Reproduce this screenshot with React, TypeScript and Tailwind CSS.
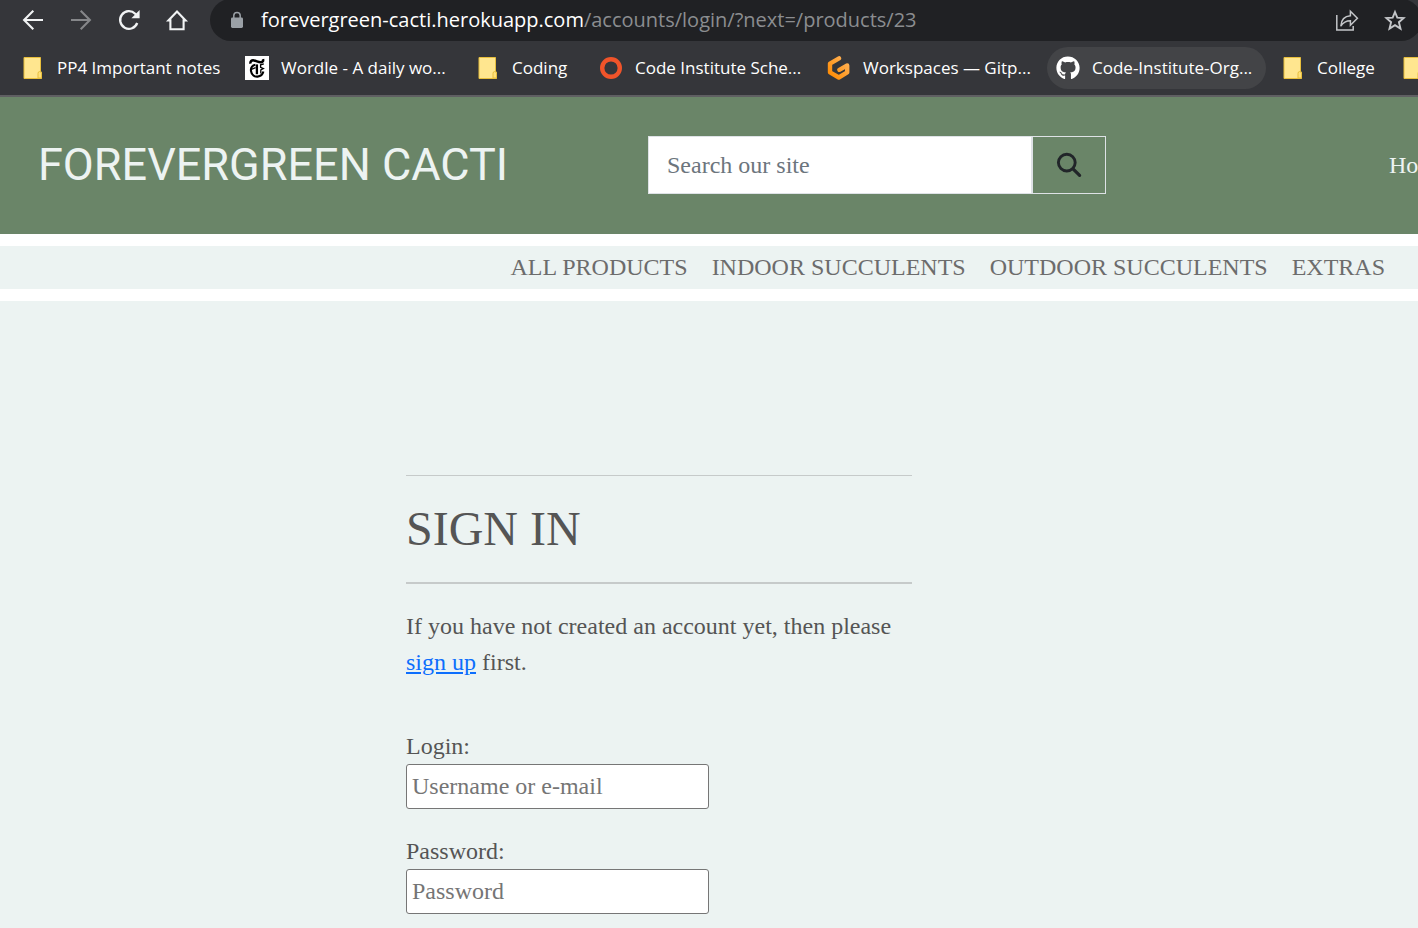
import React from 'react';
import { FaGithub } from 'react-icons/fa';

const chromeText = "font-['Open_Sans','Noto_Sans',sans-serif]";

function FolderIcon() {
  return (
    <svg width="22" height="24" viewBox="0 0 22 24" className="shrink-0" aria-hidden="true">
      <path d="M1 1.5H17.5V15.5L18.5 16V22.5H1Z" fill="#ffe68f" stroke="#e8bf3c" strokeWidth="1" />
      <path d="M15 22V17.5Q15 15.5 16.7 15.5Q18.5 15.5 18.5 17.5V22Z" fill="#ffe07a" stroke="#e8bf3c" strokeWidth="1" />
    </svg>
  );
}

function TimesIcon() {
  return (
    <svg width="24" height="24" viewBox="0 0 24 24" className="shrink-0" aria-hidden="true">
      <rect width="24" height="24" fill="#fff" />
      <g fill="none" stroke="#000">
        <path d="M5.6 7.6C5 5.2 6.6 4 9 4.4C11.6 4.9 13.6 6.4 16 6.2C17.8 6 18.5 4.8 18 3.2" strokeWidth="2.5" />
        <path d="M10.4 8.8C7.2 9.6 5.6 12 6 15C6.6 19 9.6 20.8 12.6 20.6C15.4 20.4 17.6 18.8 18.4 15.6" strokeWidth="2.1" />
        <path d="M11.9 8.4V18.2" strokeWidth="2.3" />
        <path d="M6.4 13.4L10.6 11.6" strokeWidth="1.3" />
        <path d="M18.8 7.8L15.6 8.8V11.4L18.4 12.6L15.8 14V17.6" strokeWidth="1.3" />
      </g>
    </svg>
  );
}

function RingIcon() {
  return (
    <svg width="24" height="24" viewBox="0 0 24 24" className="shrink-0" aria-hidden="true">
      <circle cx="12" cy="12" r="8.8" fill="none" stroke="#f0542a" strokeWidth="4.4" />
    </svg>
  );
}

function GitpodIcon() {
  return (
    <svg width="24" height="24" viewBox="0 0 24 24" className="shrink-0" aria-hidden="true">
      <defs>
        <linearGradient id="gitpod" x1="1" y1="0" x2="0" y2="1">
          <stop offset="0" stopColor="#ffb45b" />
          <stop offset="1" stopColor="#ff8a00" />
        </linearGradient>
      </defs>
      <path d="M12 2.4L3 7.6V16.4L11.8 21.5L20.2 16.4V9.4L12.4 13.8" fill="none" stroke="url(#gitpod)" strokeWidth="4.4" strokeLinecap="round" strokeLinejoin="round" />
    </svg>
  );
}

function BackIcon() {
  return (
    <svg width="24" height="24" viewBox="0 0 24 24" fill="none" stroke="currentColor" strokeWidth="2.1" aria-hidden="true">
      <path d="M22 12H3.5M12.3 2.8L3.1 12L12.3 21.2" />
    </svg>
  );
}

function ForwardIcon() {
  return (
    <svg width="24" height="24" viewBox="0 0 24 24" fill="none" stroke="currentColor" strokeWidth="2.1" aria-hidden="true">
      <path d="M2 12H20.5M11.7 2.8L20.9 12L11.7 21.2" />
    </svg>
  );
}

function ReloadIcon() {
  return (
    <svg width="24" height="24" viewBox="0 0 24 24" fill="none" aria-hidden="true">
      <path d="M20.2 15A8.8 8.8 0 1 1 18.2 5.8L19.6 7.2" stroke="currentColor" strokeWidth="2.3" />
      <path d="M22.6 2V10.2H14.4Z" fill="currentColor" />
    </svg>
  );
}

function HomeIcon() {
  return (
    <svg width="24" height="24" viewBox="0 0 24 24" fill="none" stroke="currentColor" strokeWidth="2.1" aria-hidden="true">
      <path d="M3.4 12.4H5.4V21.2H18.6V12.4H20.6L12 3.4Z" />
    </svg>
  );
}

function LockIcon() {
  return (
    <svg width="14" height="18" viewBox="0 0 14 18" className="shrink-0" aria-hidden="true">
      <rect x="1" y="6.5" width="12" height="10.5" rx="1.4" fill="#9aa0a6" />
      <path d="M3.8 7V4.6A3.2 3.2 0 0 1 10.2 4.6V7" fill="none" stroke="#9aa0a6" strokeWidth="1.5" />
    </svg>
  );
}

function ShareIcon() {
  return (
    <svg width="24" height="24" viewBox="0 0 24 24" fill="none" stroke="currentColor" strokeWidth="1.5" aria-hidden="true">
      <path d="M1.8 7V22H18.2V18" />
      <path d="M5.8 18.2C6.2 12 9.5 8.1 15.4 7.8V3.2L22.4 10.2L15.4 17.2V12.8C11.2 12.8 8.2 14.4 5.8 18.2Z" />
    </svg>
  );
}

function StarIcon() {
  return (
    <svg width="24" height="24" viewBox="0 0 24 24" fill="none" stroke="currentColor" strokeWidth="1.9" aria-hidden="true">
      <path d="M12 4L14.3 9.6L20.6 10.1L15.9 14.2L17.5 20.6L12 17.2L6.5 20.6L8.1 14.2L3.4 10.1L9.7 9.6Z" />
    </svg>
  );
}

function SearchIcon() {
  return (
    <svg width="26" height="26" viewBox="0 0 26 26" fill="none" stroke="#212529" aria-hidden="true">
      <circle cx="10.8" cy="10.6" r="8.4" strokeWidth="2.9" />
      <path d="M17 16.8L23.6 23.4" strokeWidth="3.2" strokeLinecap="round" />
    </svg>
  );
}

function Bookmark({ icon, label, className = '' }: { icon: React.ReactNode; label: string; className?: string }) {
  return (
    <a href="#" className={`flex h-[42px] shrink-0 items-center gap-3 whitespace-nowrap rounded-full ${className}`}>
      {icon}
      {label && <span>{label}</span>}
    </a>
  );
}

function BrowserBar() {
  return (
    <div className={`${chromeText} overflow-hidden border-b-2 border-[#5f5f62] bg-[#35363a] text-white`}>
      <div className="flex h-10 items-center">
        <div className="flex w-[210px] shrink-0 gap-6 pl-[21px] text-[#f1f3f4]">
          <button type="button" aria-label="Back"><BackIcon /></button>
          <button type="button" aria-label="Forward" className="text-[#86878a]"><ForwardIcon /></button>
          <button type="button" aria-label="Reload"><ReloadIcon /></button>
          <button type="button" aria-label="Home"><HomeIcon /></button>
        </div>
        <div className="-mr-1 flex h-[42px] grow items-center rounded-full bg-[#202124] pr-[15px] pl-5">
          <LockIcon />
          <p className="grow pl-[17px] text-[20px] leading-6 whitespace-nowrap text-[#8b8d90]">
            <span className="text-white">forevergreen-cacti.herokuapp.com</span>/accounts/login/?next=/products/23
          </p>
          <div className="flex gap-6 text-[#c4c6c9]">
            <button type="button" aria-label="Share"><ShareIcon /></button>
            <button type="button" aria-label="Bookmark this page"><StarIcon /></button>
          </div>
        </div>
      </div>
      <nav aria-label="Bookmarks" className="flex h-[55px] items-center pt-px pl-[23px] text-[17px] leading-6">
        <Bookmark icon={<FolderIcon />} label="PP4 Important notes" className="w-[222px]" />
        <Bookmark icon={<TimesIcon />} label="Wordle - A daily wo..." className="w-[233px]" />
        <Bookmark icon={<FolderIcon />} label="Coding" className="w-[121px]" />
        <Bookmark icon={<RingIcon />} label="Code Institute Sche..." className="w-[228px]" />
        <Bookmark icon={<GitpodIcon />} label="Workspaces — Gitp..." className="w-[220px]" />
        <Bookmark icon={<FaGithub size={24} />} label="Code-Institute-Org..." className="mr-[17px] w-[219px] bg-[#434447] pl-[9px]" />
        <Bookmark icon={<FolderIcon />} label="College" className="w-[120px]" />
        <Bookmark icon={<FolderIcon />} label="" />
      </nav>
    </div>
  );
}

function SiteHeader() {
  return (
    <header className="flex h-[137px] items-center overflow-hidden bg-[#6a8568] pb-0.5">
      <a href="#" className="w-[648px] shrink-0 pl-[38px] font-[Roboto,sans-serif] text-[45px] leading-[56px] whitespace-nowrap text-[#edf3f2]">
        FOREVERGREEN CACTI
      </a>
      <form className="flex h-[58px] w-[458px] shrink-0" onSubmit={(e) => e.preventDefault()}>
        <input
          type="search"
          aria-label="Search our site"
          placeholder="Search our site"
          className="min-w-0 grow border border-[#dee2e6] bg-white px-[18px] text-[24px] placeholder:text-[#6c757d]"
        />
        <button type="submit" aria-label="Search" className="flex w-[74px] items-center justify-center border border-[#dee2e6]">
          <SearchIcon />
        </button>
      </form>
      <a href="#" className="ml-auto w-[29px] shrink-0 text-[24px] text-[#edf3f2]">Home</a>
    </header>
  );
}

function Field({ id, label, type, placeholder }: { id: string; label: string; type: string; placeholder: string }) {
  return (
    <div className="flex flex-col items-start">
      <label htmlFor={id}>{label}</label>
      <input
        id={id}
        type={type}
        placeholder={placeholder}
        className="h-[45px] w-[303px] rounded-[3px] border border-[#767676] bg-white px-[5px] placeholder:text-[#757575]"
      />
    </div>
  );
}

const categories = ['ALL PRODUCTS', 'INDOOR SUCCULENTS', 'OUTDOOR SUCCULENTS', 'EXTRAS'];

export default function App() {
  return (
    <div className="flex min-h-screen flex-col overflow-x-hidden bg-white font-['Liberation_Serif',serif] text-[#555555]">
      <BrowserBar />
      <SiteHeader />
      <nav aria-label="Categories" className="my-3 flex h-[43px] items-center justify-end gap-6 bg-[#ecf3f2] pr-[33px] pb-0.5 text-[24px] leading-9 whitespace-nowrap text-[#6c6c6c]">
        {categories.map((c) => (
          <a key={c} href="#">{c}</a>
        ))}
      </nav>
      <main className="grow bg-[#ecf3f2] pt-[174px] text-[24px] leading-9">
        <section className="ml-[406px] w-[506px]">
          <hr className="border-[#c6caca]" />
          <h1 className="py-6 text-[48px] leading-[58px]">SIGN IN</h1>
          <hr className="border-t-2 border-[#c6caca]" />
          <p className="pt-6">
            If you have not created an account yet, then please <a href="#" className="text-[#0d6efd] underline">sign up</a> first.
          </p>
          <form className="flex flex-col gap-6 pt-12 pb-[14px]" onSubmit={(e) => e.preventDefault()}>
            <Field id="login" label="Login:" type="text" placeholder="Username or e-mail" />
            <Field id="password" label="Password:" type="password" placeholder="Password" />
          </form>
        </section>
      </main>
    </div>
  );
}
